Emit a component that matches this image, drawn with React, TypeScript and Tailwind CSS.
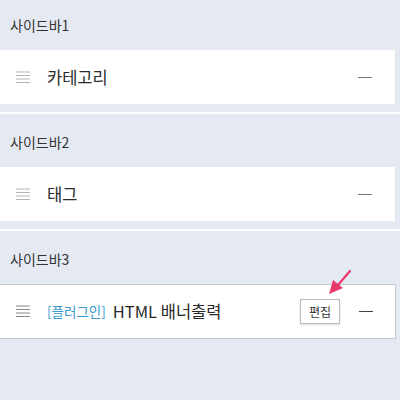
import type { ReactNode } from "react";

const FONT = { fontFamily: '"Noto Sans CJK KR", "Noto Sans", sans-serif' };

function Handle({ dark }: { dark?: boolean }) {
  return (
    <svg width="14" height="13" viewBox="0 0 14 13" className="shrink-0">
      {[1, 4.5, 8, 11.5].map((y) => (
        <line key={y} x1="0" x2="14" y1={y} y2={y} stroke={dark ? "#888" : "#b5b5b5"} strokeWidth="1" />
      ))}
    </svg>
  );
}

function MinusLine({ dark }: { dark?: boolean }) {
  return <div className={`h-px w-[14px] ${dark ? "bg-[#444]" : "bg-[#777]"}`} />;
}

function Section({
  label,
  first,
  last,
  children,
}: {
  label: string;
  first?: boolean;
  last?: boolean;
  children: ReactNode;
}) {
  return (
    <div className={`${first ? "pt-[15px]" : "pt-[18px]"} pb-[8px] ${last ? "" : "border-b-2 border-white"}`}>
      <div className="pl-[10px] h-5 leading-5 text-[14px] text-[#333]">{label}</div>
      <div className="mt-[15px]">{children}</div>
    </div>
  );
}

export default function App() {
  return (
    <div className="w-[400px] h-[400px] bg-[#e5eaf2] overflow-hidden" style={FONT}>
      <Section label="사이드바1" first>
        <div className="w-[396px] h-[54px] bg-white border-r border-[#e1e5ec] flex items-center pl-4 pr-[23px]">
          <Handle />
          <span className="ml-[17px] text-[16.5px] text-[#2a2a2a]">카테고리</span>
          <div className="ml-auto">
            <MinusLine />
          </div>
        </div>
      </Section>
      <Section label="사이드바2">
        <div className="w-[396px] h-[54px] bg-white border-r border-[#e1e5ec] flex items-center pl-4 pr-[23px]">
          <Handle />
          <span className="ml-[17px] text-[16.5px] text-[#2a2a2a]">태그</span>
          <div className="ml-auto">
            <MinusLine />
          </div>
        </div>
      </Section>
      <Section label="사이드바3" last>
        <div className="relative w-[396px] h-[55px] bg-white border-y border-r border-[#c4c8cf] flex items-center pl-4 pr-[22px]">
          <Handle dark />
          <span className="ml-[17px] text-[13.5px] text-[#3a9bcb]">[플러그인]</span>
          <span className="ml-[7px] text-[16.5px] text-[#2a2a2a]">HTML 배너출력</span>
          <div className="ml-auto flex items-center">
            <div className="w-[40px] h-[25px] border border-[#bcbcbc] bg-white shadow-[0_1px_2px_rgba(0,0,0,0.15)] flex items-center justify-center text-[12px] text-[#333]">
              편집
            </div>
            <div className="ml-[19px]">
              <MinusLine dark />
            </div>
          </div>
          <svg
            className="absolute left-[324px] top-[-16px]"
            width="30"
            height="28"
            viewBox="0 0 30 28"
          >
            <line x1="26" y1="2" x2="14" y2="16" stroke="#e8396b" strokeWidth="2.2" strokeLinecap="round" />
            <polygon points="5,25 9,11 19,19" fill="#e8396b" />
          </svg>
        </div>
      </Section>
    </div>
  );
}
